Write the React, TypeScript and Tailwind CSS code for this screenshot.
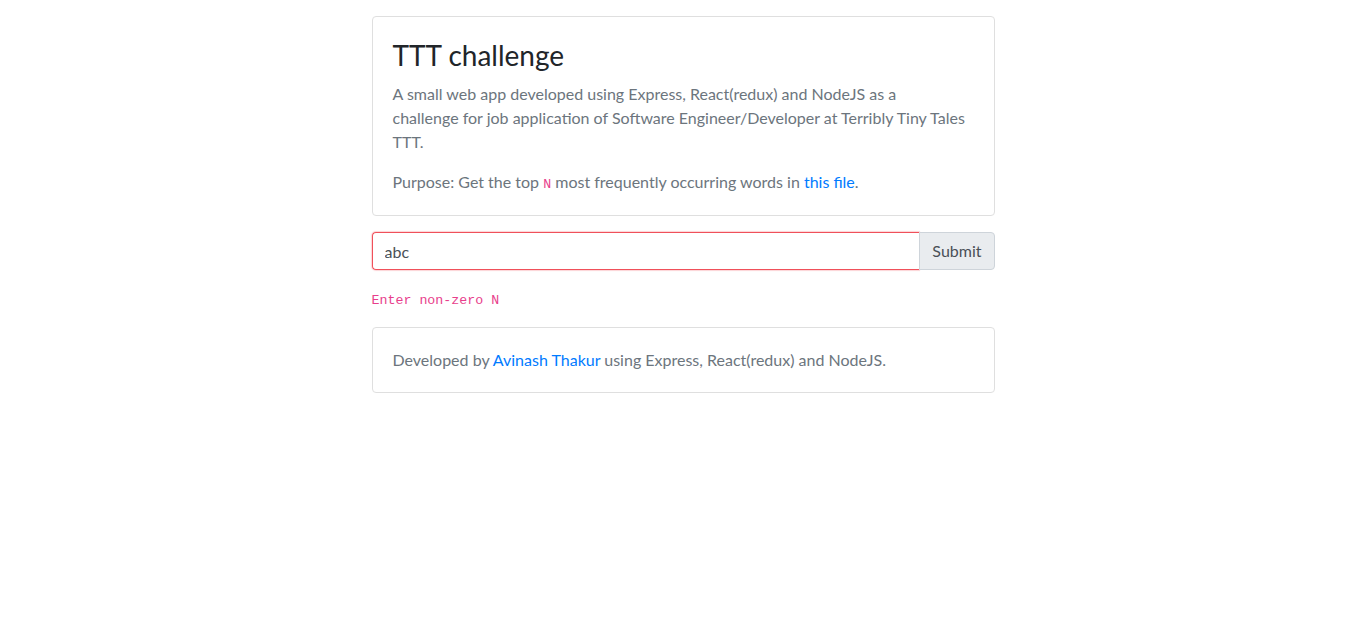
import React, { useState } from 'react'

const App = () => {
    const [n, setN] = useState("abc")

    return (
        <div className="min-h-screen bg-white font-['Lato','Liberation_Sans',sans-serif] text-base text-[#212529]">
            <div className="mx-auto w-[623px] pt-4">
                <div className="rounded border border-[#dfdfdf] bg-white px-5 pt-5 pb-[18px]">
                    <h3 className="mb-2 text-[28px] font-normal leading-[37px] text-[#212529]">TTT challenge</h3>
                    <p className="mb-4 leading-6 text-[#6c757d]">
                        A small web app developed using Express, React(redux) and NodeJS as a<br />
                        challenge for job application of Software Engineer/Developer at Terribly Tiny Tales<br />
                        TTT.
                    </p>
                    <p className="leading-6 text-[#6c757d]">
                        Purpose: Get the top <code className="font-['Liberation_Mono',monospace] text-[13.3px] text-[#e83e8c]">N</code> most frequently occurring words in <a href="#" className="text-[#007bff]">this file</a>.
                    </p>
                </div>

                <form className="mt-4 mb-4 flex h-[38px]" onSubmit={(e) => e.preventDefault()}>
                    <input
                        value={n}
                        onChange={(e) => setN(e.target.value)}
                        className="h-full flex-1 rounded-l border border-r-0 border-[#f0505a] px-3 text-base text-[#495057] shadow-[0_0_1px_1px_rgba(240,80,90,0.25)] outline-none"
                    />
                    <button type="submit" className="h-full rounded-r border border-[#ced4da] bg-[#e9ecef] px-3 text-base text-[#495057]">
                        Submit
                    </button>
                </form>

                <p className="mb-[14px] leading-6">
                    <code className="font-['Liberation_Mono',monospace] text-[13.3px] text-[#e83e8c]">Enter non-zero N</code>
                </p>

                <div className="rounded border border-[#dfdfdf] bg-white p-5">
                    <p className="leading-6 text-[#6c757d]">
                        Developed by <a href="#" className="text-[#007bff]">Avinash Thakur</a> using Express, React(redux) and NodeJS.
                    </p>
                </div>
            </div>
        </div>
    )
}

export default App
